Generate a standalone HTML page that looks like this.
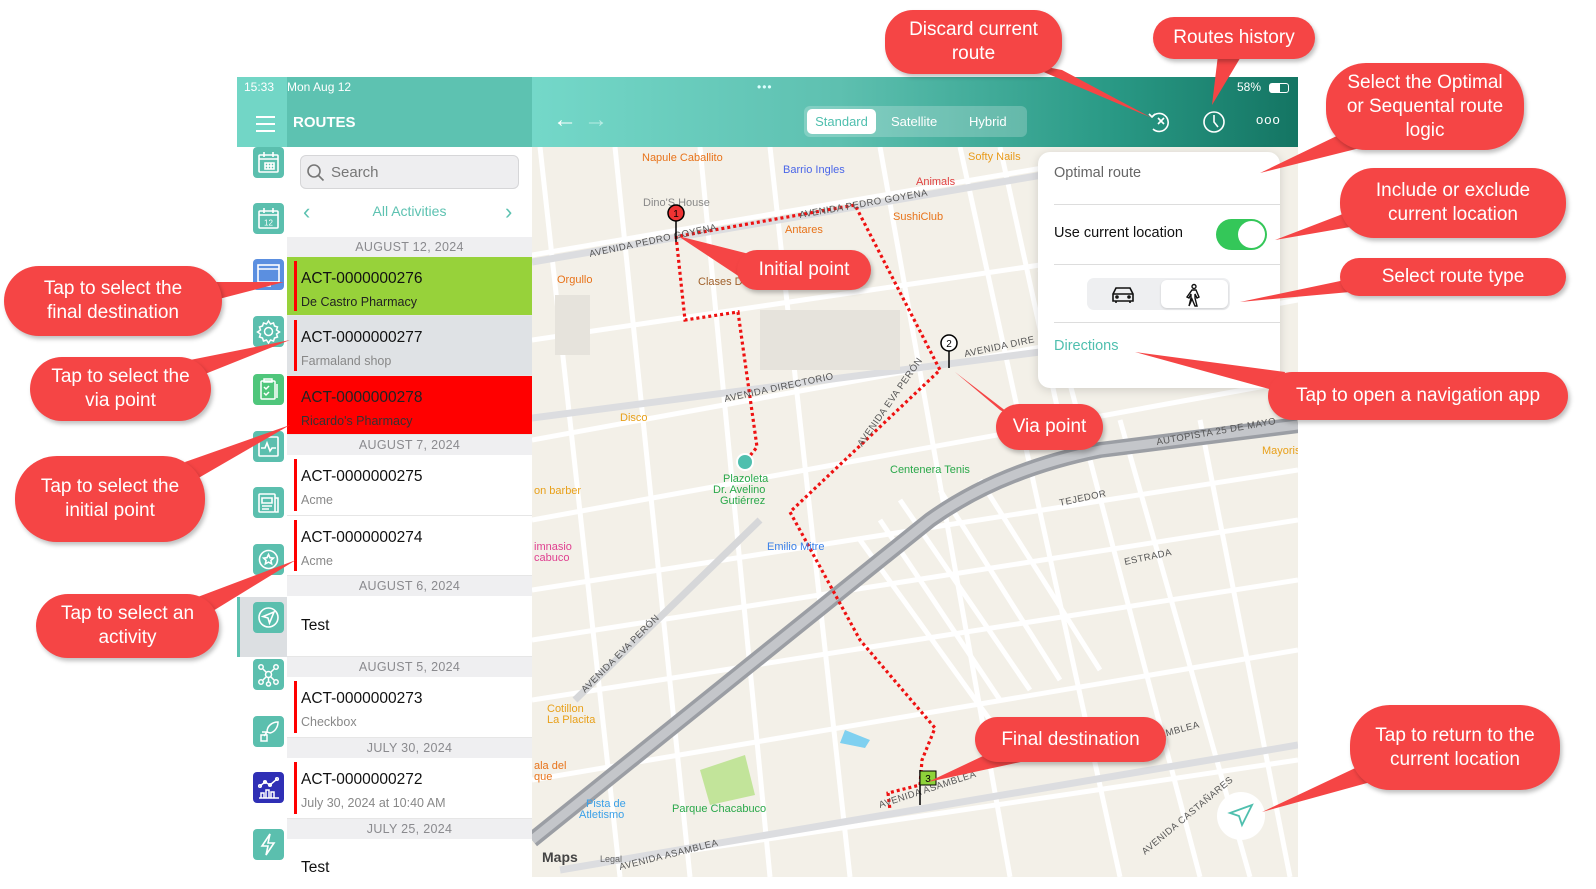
<!DOCTYPE html>
<html><head><meta charset="utf-8"><style>
*{margin:0;padding:0;box-sizing:border-box}
body{width:1596px;height:889px;background:#fff;position:relative;overflow:hidden;font-family:"Liberation Sans",sans-serif}
.abs{position:absolute}
.hdr{position:absolute;left:287px;width:245px;height:20px;background:#efeff1;color:#8a8a8e;font-size:12.5px;text-align:center;line-height:20px;letter-spacing:.3px}
.row{position:absolute;left:287px;width:245px;background:#fff;border-bottom:1px solid #e6e6e6}
.row .bar{position:absolute;left:7px;top:4px;bottom:4px;width:3px;background:#f00}
.row .t{position:absolute;left:14px;top:13px;font-size:15.5px;color:#111}
.row .s{position:absolute;left:14px;top:38px;font-size:12.5px;color:#888}
.ic{position:absolute;left:253px;width:31px;height:31px;border-radius:4px;background:#5bbfae}
.ic svg{width:31px;height:31px}
.co{position:absolute;background:#f54545;color:#fff;border-radius:28px;text-align:center;font-size:19px;display:flex;align-items:center;justify-content:center;line-height:24px;box-shadow:2px 3px 4px rgba(0,0,0,.25)}
</style></head><body>

<div class="abs" style="left:237px;top:77px;width:296px;height:70px;background:#5dc2b1"></div>
<div class="abs" style="left:237px;top:77px;width:50px;height:70px;background:#72d6c6"></div>
<div class="abs" style="left:244px;top:80px;color:#fff;font-size:12px">15:33</div>
<div class="abs" style="left:287px;top:80px;color:#fff;font-size:12px">Mon Aug 12</div>
<div class="abs" style="left:256px;top:116px;width:19px;height:2px;background:#fff;box-shadow:0 7px 0 #fff,0 14px 0 #fff"></div>
<div class="abs" style="left:293px;top:114px;color:#fff;font-size:15px;font-weight:bold">ROUTES</div>

<div class="abs" style="left:237px;top:597px;width:50px;height:60px;background:#dcdfe2;border-left:3px solid #5dc2b1"></div>
<div class="ic" style="top:147px"><svg viewBox="0 0 31 31" fill="none" stroke="#fff" stroke-width="1.6"><rect x="6" y="8" width="19" height="17" rx="1"/><path d="M6 12h19M11 5v5M20 5v5M12 16h9v6h-9zM15 16v6M18 16v6M12 19h9"/></svg></div>
<div class="ic" style="top:203px"><svg viewBox="0 0 31 31" fill="none" stroke="#fff" stroke-width="1.6"><rect x="6" y="8" width="19" height="17" rx="1"/><path d="M6 12h19M11 5v5M20 5v5"/><text x="15.5" y="22.5" font-size="8" fill="#fff" stroke="none" text-anchor="middle" font-family="Liberation Sans">12</text></svg></div>
<div class="ic" style="top:259px;background:#5b8fe0"><svg viewBox="0 0 31 31" fill="none" stroke="#fff" stroke-width="1.6"><rect x="5" y="6" width="21" height="17"/><path d="M5 10h21M15.5 23v4M13 27h5"/></svg></div>
<div class="ic" style="top:316px"><svg viewBox="0 0 31 31" fill="none" stroke="#fff" stroke-width="1.5"><circle cx="15.5" cy="15.5" r="4"/><path d="M15.5 5l2 3 3-1 1 3 3 1-1 3 3 2-3 2 1 3-3 1-1 3-3-1-2 3-2-3-3 1-1-3-3-1 1-3-3-2 3-2-1-3 3-1 1-3 3 1z"/></svg></div>
<div class="ic" style="top:374px;background:#4fc67b"><svg viewBox="0 0 31 31" fill="none" stroke="#fff" stroke-width="1.5"><rect x="8" y="7" width="14" height="18" rx="1"/><path d="M11 5h8v3h-8zM11 13l2 2 3-3M11 19l2 2 3-3M24 10v14"/></svg></div>
<div class="ic" style="top:431px"><svg viewBox="0 0 31 31" fill="none" stroke="#fff" stroke-width="1.6"><rect x="6" y="6" width="19" height="19" rx="1"/><path d="M8 17h4l2-5 3 8 2-3h4"/></svg></div>
<div class="ic" style="top:487px"><svg viewBox="0 0 31 31" fill="none" stroke="#fff" stroke-width="1.6"><rect x="6" y="7" width="16" height="18" rx="1"/><path d="M22 11h3v14h-3M9 11h10v5H9zM9 19h10M9 22h7"/></svg></div>
<div class="ic" style="top:544px"><svg viewBox="0 0 31 31" fill="none" stroke="#fff" stroke-width="1.6"><circle cx="15.5" cy="15.5" r="9"/><path d="M15.5 10.5l1.5 3.2 3.4.4-2.5 2.3.7 3.4-3.1-1.7-3.1 1.7.7-3.4-2.5-2.3 3.4-.4z"/></svg></div>
<div class="ic" style="top:602px"><svg viewBox="0 0 31 31" fill="none" stroke="#fff" stroke-width="1.6"><circle cx="15.5" cy="15.5" r="9.5"/><path d="M21 10l-11 4.5 5 1.5 1.5 5z"/></svg></div>
<div class="ic" style="top:659px"><svg viewBox="0 0 31 31" fill="none" stroke="#fff" stroke-width="1.5"><circle cx="15.5" cy="15.5" r="3"/><circle cx="8" cy="8" r="2.2"/><circle cx="23" cy="8" r="2.2"/><circle cx="8" cy="23" r="2.2"/><circle cx="23" cy="23" r="2.2"/><circle cx="15.5" cy="25" r="2"/><path d="M10 10l3.5 3.5M21 10l-3.5 3.5M10 21l3.5-3.5M21 21l-3.5-3.5M15.5 18.5v4.5"/></svg></div>
<div class="ic" style="top:716px"><svg viewBox="0 0 31 31" fill="none" stroke="#fff" stroke-width="1.5"><path d="M25 6c-6 0-11 4-11 10l3 1c5-1 8-6 8-11zM14 16l-3 4M8 19h6v6H8zM9 16h4v3"/></svg></div>
<div class="ic" style="top:772px;background:#2f2fb5"><svg viewBox="0 0 31 31" fill="none" stroke="#fff" stroke-width="1.5"><path d="M6 26h20M8 26v-5h3v5M13 26v-8h3v8M18 26v-6h3v6M7 14l5-4 5 3 7-6"/><circle cx="7" cy="14" r="1.3"/><circle cx="12" cy="10" r="1.3"/><circle cx="17" cy="13" r="1.3"/><circle cx="24" cy="7" r="1.3"/></svg></div>
<div class="ic" style="top:829px"><svg viewBox="0 0 31 31" fill="none" stroke="#fff" stroke-width="1.6"><path d="M17 5l-8 12h6l-2 9 8-12h-6z"/></svg></div>

<div class="abs" style="left:287px;top:147px;width:245px;height:90px;background:#fff"></div>
<div class="abs" style="left:300px;top:155px;width:219px;height:34px;background:#eeeef0;border:1px solid #d6d6d8;border-radius:6px"></div>
<svg class="abs" style="left:306px;top:163px" width="20" height="20" fill="none" stroke="#777" stroke-width="1.6"><circle cx="8" cy="8" r="6"/><path d="M12.5 12.5l5 5"/></svg>
<div class="abs" style="left:331px;top:164px;font-size:15px;color:#777">Search</div>
<div class="abs" style="left:303px;top:199px;font-size:22px;color:#5dc2b1">‹</div>
<div class="abs" style="left:505px;top:199px;font-size:22px;color:#5dc2b1">›</div>
<div class="abs" style="left:287px;top:203px;width:245px;text-align:center;font-size:14px;color:#5dc2b1">All Activities</div>

<div class="hdr" style="top:237px">AUGUST 12, 2024</div>
<div class="row" style="top:257px;height:59px;background:#97d23a"><div class="bar"></div><div class="t">ACT-0000000276</div><div class="s" style="color:#222">De Castro Pharmacy</div></div>
<div class="row" style="top:316px;height:60px;background:#dfe2e5"><div class="bar"></div><div class="t">ACT-0000000277</div><div class="s">Farmaland shop</div></div>
<div class="row" style="top:376px;height:59px;background:#ff0000"><div class="t" style="color:#222">ACT-0000000278</div><div class="s" style="color:#333">Ricardo's Pharmacy</div></div>
<div class="hdr" style="top:435px">AUGUST 7, 2024</div>
<div class="row" style="top:455px;height:61px"><div class="bar"></div><div class="t">ACT-0000000275</div><div class="s">Acme</div></div>
<div class="row" style="top:516px;height:60px"><div class="bar"></div><div class="t">ACT-0000000274</div><div class="s">Acme</div></div>
<div class="hdr" style="top:576px">AUGUST 6, 2024</div>
<div class="row" style="top:596px;height:61px"><div class="t" style="top:21px">Test</div></div>
<div class="hdr" style="top:657px">AUGUST 5, 2024</div>
<div class="row" style="top:677px;height:61px"><div class="bar"></div><div class="t">ACT-0000000273</div><div class="s">Checkbox</div></div>
<div class="hdr" style="top:738px">JULY 30, 2024</div>
<div class="row" style="top:758px;height:61px"><div class="bar"></div><div class="t">ACT-0000000272</div><div class="s">July 30, 2024 at 10:40 AM</div></div>
<div class="hdr" style="top:819px">JULY 25, 2024</div>
<div class="row" style="top:839px;height:40px;border:none"><div class="t" style="top:20px">Test</div></div>

<svg class="abs" style="left:532px;top:147px" width="766" height="730" viewBox="532 147 766 730">
<rect x="532" y="147" width="766" height="730" fill="#f3f0e8"/>
<g stroke="#fff" stroke-width="5" fill="none">
<path d="M532 255L1060 165M532 340L1040 265M532 440L1298 300M532 590L1298 470M532 700L1298 580M532 780L1298 650M560 870L1298 760M532 520L1298 380M532 640L1298 520"/>
<path d="M540 147L620 877M615 147L690 877M700 147L770 877M770 147L850 877M880 147L1010 877M960 147L1120 877M1040 270L1200 877M1120 420L1250 877M1200 420L1290 877M1000 147L1060 420"/>
<path d="M880 520L1000 700M860 540L990 720M900 500L1030 690M940 490L1060 680M980 480L1100 670"/>
</g>
<g stroke="#dcdde0" stroke-width="7" fill="none"><path d="M532 262L1060 172M532 418L1040 352M560 870L1298 745"/></g>
<path d="M532 840L930 520Q1000 470 1100 450L1298 425" stroke="#9b9ea4" stroke-width="16" fill="none"/>
<path d="M532 840L930 520Q1000 470 1100 450L1298 425" stroke="#c4c6ca" stroke-width="9" fill="none"/>
<path d="M575 700L760 520" stroke="#d6d7d9" stroke-width="7"/>
<rect x="555" y="295" width="35" height="60" fill="#e6e3dc"/><rect x="760" y="310" width="140" height="60" fill="#e6e3dc"/>
<path d="M700 770l45-15 10 40-45 10z" fill="#c2e49a"/><path d="M845 730l25 10-5 8-25-5z" fill="#7fd0f0"/>
<g stroke="#e11" stroke-width="3.2" stroke-dasharray="3 3" fill="none">
<path d="M676 236L685 320L738 312L757 447L745 462"/>
<path d="M680 236L855 205L940 370L790 512L860 640L935 728L922 760L920 785L888 793L890 810"/>
</g>
<g font-family="Liberation Sans" font-size="11">
<text x="642" y="161" fill="#e8731a">Napule Caballito</text>
<text x="783" y="173" fill="#4a66e8">Barrio Ingles</text>
<text x="643" y="206" fill="#888">Dino'S House</text>
<text x="785" y="233" fill="#e8731a">Antares</text>
<text x="893" y="220" fill="#e8731a">SushiClub</text>
<text x="916" y="185" fill="#e04040">Animals</text>
<text x="968" y="160" fill="#e89a1a">Softy Nails</text>
<text x="557" y="283" fill="#e8731a">Orgullo</text>
<text x="698" y="285" fill="#a0602a">Clases D</text>
<text x="620" y="421" fill="#e8a01a">Disco</text>
<text x="534" y="494" fill="#e8a01a">on barber</text>
<text x="890" y="473" fill="#2aa84a">Centenera Tenis</text>
<text x="723" y="482" fill="#2aa84a">Plazoleta</text>
<text x="713" y="493" fill="#2aa84a">Dr. Avelino</text>
<text x="720" y="504" fill="#2aa84a">Gutiérrez</text>
<text x="767" y="550" fill="#3a80e8">Emilio Mitre</text>
<text x="534" y="550" fill="#e04090">imnasio</text>
<text x="534" y="561" fill="#e04090">cabuco</text>
<text x="547" y="712" fill="#e8a01a">Cotillon</text>
<text x="547" y="723" fill="#e8a01a">La Placita</text>
<text x="534" y="769" fill="#e8731a">ala del</text>
<text x="534" y="780" fill="#e8731a">que</text>
<text x="586" y="807" fill="#3aa0e8">Pista de</text>
<text x="579" y="818" fill="#3aa0e8">Atletismo</text>
<text x="672" y="812" fill="#2aa84a">Parque Chacabuco</text>
<text x="1262" y="454" fill="#e8a01a">Mayoris</text>
</g>
<g font-family="Liberation Sans" font-size="9.5" fill="#555" letter-spacing=".5">
<text transform="translate(590 257) rotate(-12)">AVENIDA PEDRO GOYENA</text>
<text transform="translate(800 218) rotate(-10)">AVENIDA PEDRO GOYENA</text>
<text transform="translate(725 402) rotate(-12)">AVENIDA DIRECTORIO</text>
<text transform="translate(965 357) rotate(-12)">AVENIDA DIRE</text>
<text transform="translate(862 447) rotate(-55)">AVENIDA EVA PERÓN</text>
<text transform="translate(585 693) rotate(-45)">AVENIDA EVA PERÓN</text>
<text transform="translate(1157 445) rotate(-10)">AUTOPISTA 25 DE MAYO</text>
<text transform="translate(880 808) rotate(-18)">AVENIDA ASAMBLEA</text>
<text transform="translate(620 870) rotate(-14)">AVENIDA ASAMBLEA</text>
<text transform="translate(1145 855) rotate(-40)">AVENIDA CASTAÑARES</text>
<text transform="translate(1160 738) rotate(-15)">AMBLEA</text>
<text transform="translate(1060 506) rotate(-12)">TEJEDOR</text>
<text transform="translate(1125 565) rotate(-12)">ESTRADA</text>
</g>
<circle cx="745" cy="462" r="8" fill="#4fbfae" stroke="#fff" stroke-width="2"/>
<path d="M676 220v22M949 350v18" stroke="#000" stroke-width="1.5"/>
<circle cx="676" cy="213" r="8" fill="#e33" stroke="#000" stroke-width="1.5"/><text x="676" y="217" font-size="10" text-anchor="middle" fill="#000" font-family="Liberation Sans">1</text>
<circle cx="949" cy="343" r="8" fill="#fff" stroke="#000" stroke-width="1.5"/><text x="949" y="347" font-size="10" text-anchor="middle" fill="#000" font-family="Liberation Sans">2</text>
<path d="M920 770v35" stroke="#000" stroke-width="1.5"/><rect x="920" y="771" width="16" height="14" fill="#8ed23a" stroke="#000"/><text x="928" y="782" font-size="10" text-anchor="middle" font-family="Liberation Sans">3</text>
<text x="542" y="862" font-size="14" fill="#444" font-family="Liberation Sans" font-weight="bold">Maps</text>
<text x="600" y="862" font-size="9" fill="#666" font-family="Liberation Sans">Legal</text>
<circle cx="1241" cy="816" r="24" fill="#fff"/>
<path d="M1252 805l-22 8 9 3 3 9z" fill="none" stroke="#4fbfae" stroke-width="1.8"/>
</svg>

<div class="abs" style="left:532px;top:77px;width:766px;height:70px;background:linear-gradient(90deg,#74d8c9 0%,#5ec0b0 40%,#2a9a86 75%,#147563 100%)"></div>
<div class="abs" style="left:757px;top:80px;color:#dff;font-size:12px;letter-spacing:1px">•••</div>
<div class="abs" style="left:553px;top:106px;color:#fff;font-size:24px">←</div>
<div class="abs" style="left:584px;top:106px;color:#b8ece4;font-size:24px">→</div>
<div class="abs" style="left:804px;top:106px;width:223px;height:31px;border-radius:6px;background:rgba(255,255,255,.22)"></div>
<div class="abs" style="left:807px;top:109px;width:69px;height:25px;border-radius:5px;background:#fff;color:#4fbfae;font-size:13px;text-align:center;line-height:25px">Standard</div>
<div class="abs" style="left:891px;top:114px;color:#fff;font-size:13px">Satellite</div>
<div class="abs" style="left:969px;top:114px;color:#fff;font-size:13px">Hybrid</div>
<svg class="abs" style="left:1145px;top:107px" width="30" height="30" fill="none" stroke="#fff" stroke-width="1.6"><path d="M7 10a9 9 0 1 1 1 12"/><path d="M4 7l3 3 3-3M13 11l6 6M19 11l-6 6"/></svg>
<svg class="abs" style="left:1200px;top:107px" width="30" height="30" fill="none" stroke="#fff" stroke-width="1.6"><circle cx="14" cy="15" r="10"/><path d="M14 8v7l4 5"/></svg>
<div class="abs" style="left:1256px;top:112px;color:#fff;font-size:13px;letter-spacing:1px">ooo</div>
<div class="abs" style="left:1237px;top:80px;color:#fff;font-size:12px">58%</div>
<div class="abs" style="left:1269px;top:83px;width:20px;height:10px;border:1.5px solid #fff;border-radius:3px"><div style="width:10px;height:100%;background:#fff"></div></div>

<div class="abs" style="left:1038px;top:152px;width:242px;height:236px;background:#fff;border-radius:12px;box-shadow:0 2px 10px rgba(0,0,0,.15)"></div>
<div class="abs" style="left:1054px;top:165px;font-size:14.5px;color:#666">Optimal route</div>
<div class="abs" style="left:1054px;top:204px;width:226px;height:1px;background:#ddd"></div>
<div class="abs" style="left:1054px;top:225px;font-size:14.5px;color:#111">Use current location</div>
<div class="abs" style="left:1216px;top:219px;width:51px;height:31px;border-radius:16px;background:#34c759"></div>
<div class="abs" style="left:1238px;top:221px;width:27px;height:27px;border-radius:50%;background:#fff"></div>
<div class="abs" style="left:1054px;top:264px;width:226px;height:1px;background:#ddd"></div>
<div class="abs" style="left:1087px;top:278px;width:143px;height:32px;border-radius:7px;background:#eeeff1"></div>
<div class="abs" style="left:1161px;top:280px;width:67px;height:28px;border-radius:6px;background:#fff;box-shadow:0 1px 2px rgba(0,0,0,.15)"></div>
<svg class="abs" style="left:1110px;top:284px" width="26" height="20" fill="none" stroke="#111" stroke-width="1.6"><path d="M3 10l3-6h14l3 6v7H3zM3 10h20M6 17v2M20 17v2"/><circle cx="7" cy="13" r="1"/><circle cx="19" cy="13" r="1"/></svg>
<svg class="abs" style="left:1184px;top:283px" width="20" height="24" fill="none" stroke="#111" stroke-width="1.4"><circle cx="10" cy="3.5" r="2"/><path d="M8 7h4l3 7-2 1-2-4v4l2 8h-2l-3-7-3 7H5l2-8v-4l-2 4-2-1z"/></svg>
<div class="abs" style="left:1054px;top:322px;width:226px;height:1px;background:#ddd"></div>
<div class="abs" style="left:1054px;top:338px;font-size:14.5px;color:#4fbfae">Directions</div>

<svg class="abs" style="left:0;top:0" width="1596" height="889">
<g fill="#f54545">
<polygon points="1020,62 1062,70 1152,118"/>
<polygon points="1218,55 1242,55 1212,105"/>
<polygon points="1345,132 1368,146 1260,173"/>
<polygon points="1348,212 1356,226 1275,240"/>
<polygon points="1345,280 1350,292 1240,302"/>
<polygon points="1285,372 1280,392 1135,352"/>
<polygon points="1368,762 1378,780 1262,812"/>
<polygon points="1000,748 1030,760 928,782"/>
<polygon points="1000,410 1015,418 955,372"/>
<polygon points="765,258 752,285 678,236"/>
<polygon points="200,282 215,300 284,282"/>
<polygon points="180,362 195,378 290,340"/>
<polygon points="185,462 195,480 290,425"/>
<polygon points="195,598 208,614 296,560"/>
</g></svg>

<div class="co" style="left:885px;top:10px;width:177px;height:64px">Discard current<br>route</div>
<div class="co" style="left:1153px;top:17px;width:162px;height:42px">Routes history</div>
<div class="co" style="left:1326px;top:63px;width:198px;height:87px;border-radius:40px">Select the Optimal<br>or Sequental route<br>logic</div>
<div class="co" style="left:1340px;top:168px;width:226px;height:70px;border-radius:34px">Include or exclude<br>current location</div>
<div class="co" style="left:1340px;top:258px;width:226px;height:38px">Select route type</div>
<div class="co" style="left:1268px;top:372px;width:300px;height:48px">Tap to open a navigation app</div>
<div class="co" style="left:1350px;top:705px;width:210px;height:85px;border-radius:40px">Tap to return to the<br>current location</div>
<div class="co" style="left:975px;top:717px;width:191px;height:45px">Final destination</div>
<div class="co" style="left:996px;top:404px;width:107px;height:46px">Via point</div>
<div class="co" style="left:737px;top:250px;width:134px;height:40px">Initial point</div>
<div class="co" style="left:4px;top:266px;width:218px;height:70px;border-radius:35px">Tap to select the<br>final destination</div>
<div class="co" style="left:30px;top:357px;width:181px;height:64px;border-radius:32px">Tap to select the<br>via point</div>
<div class="co" style="left:15px;top:456px;width:190px;height:86px;border-radius:42px">Tap to select the<br>initial point</div>
<div class="co" style="left:36px;top:594px;width:183px;height:64px;border-radius:32px">Tap to select an<br>activity</div>
</body></html>
